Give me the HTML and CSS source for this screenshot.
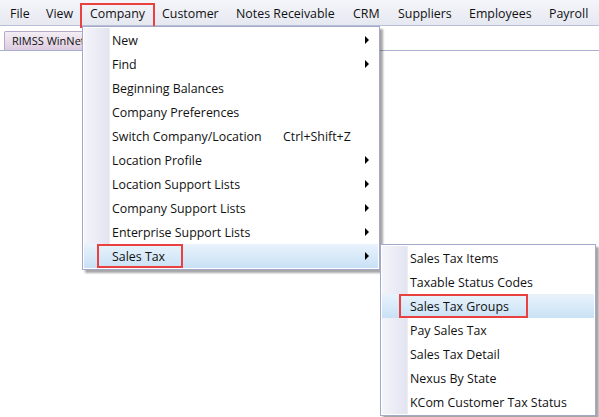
FILE: index.html
```html
<!DOCTYPE html>
<html>
<head>
<meta charset="utf-8">
<link rel="stylesheet" href="styles.css">
</head>
<body>
<div class="app">
  <div class="menubar">
    <span class="mi mi-file">File</span>
    <span class="mi mi-view">View</span>
    <span class="mi mi-company boxed">Company</span>
    <span class="mi mi-customer">Customer</span>
    <span class="mi mi-notes">Notes Receivable</span>
    <span class="mi mi-crm">CRM</span>
    <span class="mi mi-sup">Suppliers</span>
    <span class="mi mi-emp">Employees</span>
    <span class="mi mi-pay">Payroll</span>
  </div>
  <div class="tabbar">
    <div class="tab">RIMSS WinNet</div>
  </div>
  <div class="content"></div>

  <div class="menu menu-company">
    <div class="row"><span class="label">New</span><span class="arrow"></span></div>
    <div class="row"><span class="label">Find</span><span class="arrow"></span></div>
    <div class="row"><span class="label">Beginning Balances</span></div>
    <div class="row"><span class="label">Company Preferences</span></div>
    <div class="row"><span class="label">Switch Company/Location</span><span class="shortcut">Ctrl+Shift+Z</span></div>
    <div class="row"><span class="label">Location Profile</span><span class="arrow"></span></div>
    <div class="row"><span class="label">Location Support Lists</span><span class="arrow"></span></div>
    <div class="row"><span class="label">Company Support Lists</span><span class="arrow"></span></div>
    <div class="row"><span class="label">Enterprise Support Lists</span><span class="arrow"></span></div>
    <div class="row hl"><span class="label">Sales Tax</span><span class="arrow"></span><span class="redbox rb-salestax"></span></div>
  </div>

  <div class="menu menu-tax">
    <div class="row"><span class="label">Sales Tax Items</span></div>
    <div class="row"><span class="label">Taxable Status Codes</span></div>
    <div class="row hl"><span class="label">Sales Tax Groups</span><span class="redbox rb-groups"></span></div>
    <div class="row"><span class="label">Pay Sales Tax</span></div>
    <div class="row"><span class="label">Sales Tax Detail</span></div>
    <div class="row"><span class="label">Nexus By State</span></div>
    <div class="row"><span class="label">KCom Customer Tax Status</span></div>
  </div>
</div>
</body>
</html>
```
FILE: styles.css
```css
html, body {
  margin: 0;
  padding: 0;
  background: #ffffff;
}
body {
  font-family: "Open Sans", "Noto Sans", sans-serif;
  font-size: 12.4px;
  color: #111;
}
.app {
  position: relative;
  width: 599px;
  height: 417px;
  overflow: hidden;
  background: #fff;
}
.menubar {
  display: flex;
  align-items: center;
  height: 26px;
  background: linear-gradient(#f5f6fa, #e6e8f1);
  border-bottom: 1px solid #b8bdd8;
  box-sizing: border-box;
  padding-left: 10px;
  font-size: 12.4px;
}
.mi {
  position: relative;
  white-space: nowrap;
  line-height: 26px;
  padding-top: 2px;
  flex: 0 0 auto;
}
.mi-file { width: 36px; }
.mi-view { width: 44px; }
.mi-company { width: 72px; }
.boxed::after {
  content: "";
  position: absolute;
  left: -10px;
  width: 75px;
  top: 4px;
  bottom: -1px;
  border: 2px solid #e8413f;
  box-sizing: border-box;
}
.mi-customer { width: 74px; }
.mi-notes { width: 117px; }
.mi-crm { width: 45px; }
.mi-sup { width: 71px; }
.mi-emp { width: 80px; }
.tabbar {
  height: 25px;
  box-sizing: border-box;
  border-bottom: 1px solid #a9afd0;
  padding: 5px 0 0 4px;
  background: #fff;
}
.tab {
  width: 90px;
  height: 19px;
  box-sizing: border-box;
  border: 1px solid #b8a8c8;
  border-bottom: none;
  border-radius: 2px 2px 0 0;
  background: linear-gradient(#f4eef4, #dccbe0);
  font-size: 11px;
  line-height: 17px;
  padding-left: 7px;
  white-space: nowrap;
}
.content {
  height: 366px;
}
.menu {
  position: absolute;
  background: #fff;
  border: 1px solid #a4a8c8;
  box-sizing: border-box;
  padding: 1px;
  box-shadow: 3px 3px 2px rgba(0,0,0,0.35);
}
.menu::before {
  content: "";
  position: absolute;
  left: 1px; top: 1px; bottom: 1px;
  width: 25px;
  background: linear-gradient(to right, #f4f4fa, #e2e4f0);
  border-right: 1px solid #ecedf5;
}
.menu-company {
  left: 82px;
  top: 26px;
  width: 298px;
  height: 244px;
}
.menu-tax {
  left: 380px;
  top: 244px;
  width: 216px;
  height: 172px;
}
.row {
  position: relative;
  display: flex;
  align-items: center;
  height: 24px;
  padding-left: 28px;
  white-space: nowrap;
  z-index: 1;
}
.hl {
  background: linear-gradient(#e9f3fc, #c9e1f5);
}
.label {
  flex: 0 0 auto;
}
.shortcut {
  position: absolute;
  left: 199px;
}
.arrow {
  position: absolute;
  left: 281px;
  top: 8px;
  width: 0;
  height: 0;
  border-top: 4px solid transparent;
  border-bottom: 4px solid transparent;
  border-left: 4px solid #000;
}
.redbox {
  position: absolute;
  border: 2px solid #e8413f;
  box-sizing: border-box;
}
.rb-salestax {
  left: 13px;
  top: 0px;
  width: 86px;
  height: 24px;
}
.rb-groups {
  left: 17px;
  top: 0px;
  width: 129px;
  height: 24px;
}
```
